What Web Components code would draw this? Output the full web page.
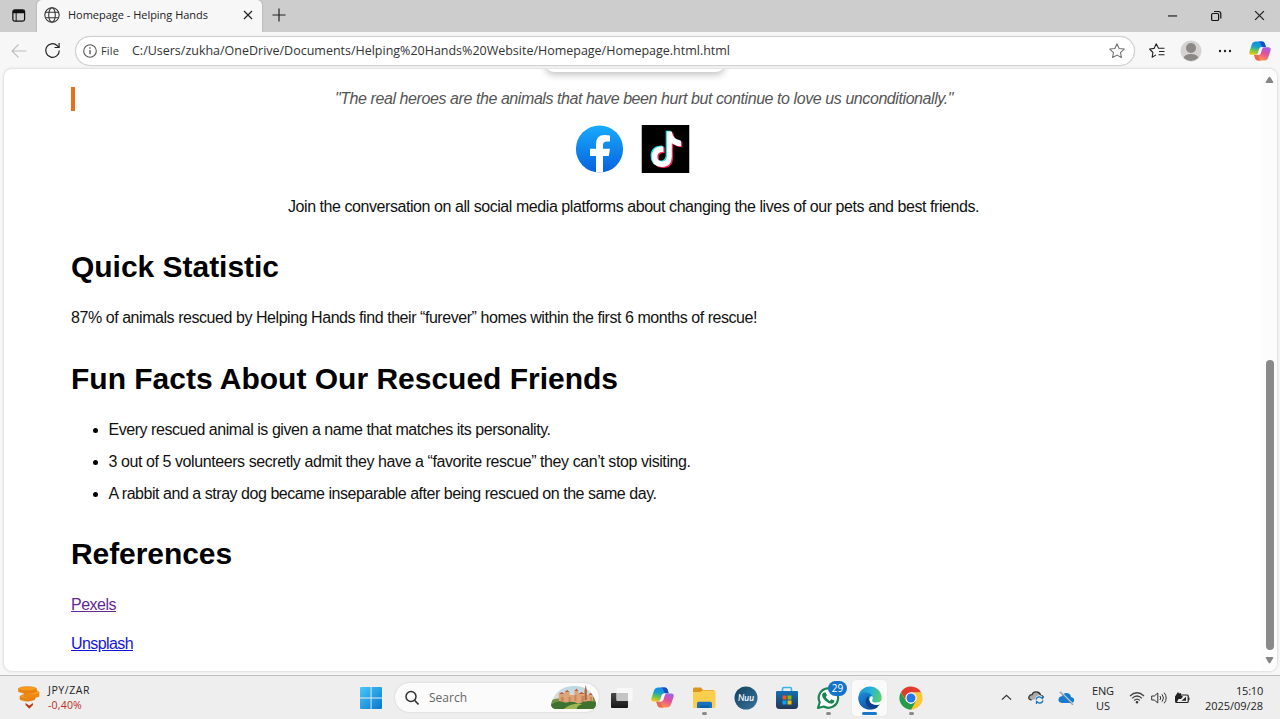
<!DOCTYPE html>
<html lang="en"><head><meta charset="utf-8"><title>Homepage - Helping Hands</title>
<style>html,body{margin:0;height:100%;overflow:hidden}body{font-family:"Liberation Sans",Arial,sans-serif}</style></head>
<body><desktop-screen></desktop-screen>
<script>
const define=(name,html)=>{const t=document.createElement('template');t.innerHTML=html;
 customElements.define(name,class extends HTMLElement{constructor(){super();this.attachShadow({mode:'open'}).append(t.content.cloneNode(true));}});};

/* Inline text that spreads its letters evenly over a given width */
customElements.define('fit-text',class extends HTMLElement{
 constructor(){super();this.attachShadow({mode:'open'}).innerHTML='<style>:host{display:inline-block;white-space:nowrap}span{display:inline-block;text-decoration:inherit}</style><span><slot></slot></span>';}
 connectedCallback(){const w=+this.getAttribute('width'),s=this.shadowRoot.querySelector('span');const n=this.textContent.length;
  s.style.letterSpacing=((w-s.getBoundingClientRect().width)/n)+'px';this.style.width=w+'px';}
});

const icons={
 tabs:['0 0 16 16','<rect x="2" y="2" width="12.5" height="12" rx="2" fill="none" stroke="#111" stroke-width="1.3"/><path d="M2 4q0-2 2-2h8.500q2 0 2 2v1.500H2z" fill="#111"/><path d="M5.500 5v9" stroke="#111" stroke-width="1"/>'],
 globe:['0 0 16 16','<g fill="none" stroke="#333" stroke-width="1.050"><circle cx="8" cy="8" r="7.200"/><ellipse cx="8" cy="8" rx="3.300" ry="7.200"/><path d="M1.500 5.300h13M1.500 10.700h13"/></g>'],
 close:['0 0 10 10','<path d="M1 1l8 8M9 1l-8 8" stroke="#222" stroke-width="1.200" fill="none"/>'],
 plus:['0 0 14 14','<path d="M.5 7h13M7 .5v13" stroke="#222" stroke-width="1.200"/>'],
 min:['0 0 12 12','<path d="M1 6.500h10" stroke="#111" stroke-width="1.200"/>'],
 restore:['0 0 12 12','<g fill="none" stroke="#111" stroke-width="1.200"><rect x="1.600" y="3.500" width="7" height="7" rx="1.300"/><path d="M4 1.500h4.500q2.300 0 2.300 2.300V8.500"/></g>'],
 back:['0 0 16 16','<path d="M15.500 8H1M7.500 1.500L1 8l6.500 6.500" fill="none" stroke="#bebebe" stroke-width="1.100"/>'],
 reload:['0 0 18 18','<path d="M16.200 9A7.200 7.200 0 1 1 13.800 3.650L16 5.700" fill="none" stroke="#222" stroke-width="1.250"/><path d="M16 1v4.800h-4.800" fill="none" stroke="#222" stroke-width="1.250"/>'],
 info:['0 0 14 14','<circle cx="7" cy="7" r="6.300" fill="none" stroke="#555" stroke-width="1.100"/><path d="M7 6v4.300" stroke="#444" stroke-width="1.200"/><circle cx="7" cy="4" r=".8" fill="#444"/>'],
 star:['0 0 16 16','<path d="M8 .8l2.150 4.650 5.050.65-3.700 3.450.95 5-4.450-2.450-4.450 2.450.95-5L.8 6.100l5.050-.65z" fill="none" stroke="#707070" stroke-width="1.050" stroke-linejoin="round"/>'],
 favs:['0 0 16 16','<path d="M9.500 5.300L7.200.8 5.100 5.400.6 6l3.300 3.500-.8 4.800 3.900-2.400M9 5.300h6.500M10 8.500h5.500M9.500 11.800h6" fill="none" stroke="#222" stroke-width="1.100" stroke-linejoin="round"/>'],
 user:['0 0 22 22','<defs><clipPath id="c"><circle cx="11" cy="11" r="10"/></clipPath></defs><circle cx="11" cy="11" r="10.500" fill="#d5d3d1"/><g fill="#8b8886"><circle cx="11" cy="8" r="5"/><ellipse cx="11" cy="18.500" rx="7.500" ry="4.500" clip-path="url(#c)"/></g>'],
 more:['0 0 14 4','<g fill="#222"><circle cx="2" cy="2" r="1.200"/><circle cx="7" cy="2" r="1.200"/><circle cx="12" cy="2" r="1.200"/></g>'],
 copilot:['0 0 23 21','<defs><linearGradient id="a" x1=".6" y1="0" x2=".3" y2="1"><stop stop-color="#1687e8"/><stop offset=".4" stop-color="#15a0cf"/><stop offset=".7" stop-color="#6dc54c"/><stop offset="1" stop-color="#f2c61b"/></linearGradient><linearGradient id="b" x1=".8" y1="0" x2=".4" y2="1"><stop stop-color="#9b65ed"/><stop offset=".45" stop-color="#e24e9e"/><stop offset="1" stop-color="#ff974b"/></linearGradient></defs><path d="M7.500.5H14q1.800 0 2.500 2l1.200 3.800h-3.200q-2 0-2.600 2L10 14.500H2.500Q-.4 14.500.4 11.300L3 3.500Q4 .5 7.500.5z" fill="url(#a)"/><path d="M10 .5h4q1.800 0 2.500 2l1.200 3.800h-3.500Q13 5.500 12.300 3 11.500.7 10 .5z" fill="#1a4bc4"/><path d="M15.500 20.500H9q-1.800 0-2.500-2l-1.200-3.800h3.200q2 0 2.600-2L13 6.500h7.500q2.900 0 2.100 3.200L20 17.500q-1 3-4.500 3z" fill="url(#b)"/><path d="M13 20.500H9q-1.800 0-2.500-2l-1.200-3.800h3.500q1.200.8 1.900 3.300.8 2.300 2.300 2.500z" fill="#f0664d"/><path d="M12.300 6.500h3.200q-1.300.5-1.800 2l-1.200 4q-.7 2-2.500 2H7.500q1.300-.5 1.800-2l1.200-4q.5-1.700 1.800-2z" fill="#fff"/>'],
 facebook:['0 0 48 48','<defs><linearGradient id="f" x2="0" y2="1"><stop stop-color="#18abfc"/><stop offset="1" stop-color="#0761df"/></linearGradient></defs><circle cx="24" cy="24" r="23.600" fill="url(#f)"/><path d="M20.500 47.300V31h-6v-7.300h6v-4.800q0-9 8.600-9 2.800 0 5.400.6v6h-3.200q-3.800 0-3.800 3.600v3.600h7L33.300 31h-5.800v16.300q-3.500.6-7 0z" fill="#fff"/>'],
 tiktok:['0 0 48 48','<path d="M0 0h48v48H0z" fill="#000"/><defs><path id="n" d="M25.500 6.500h4.800q1 8.500 9.200 9.200v5.600q-5 0-9.200-3v12.400q0 11.300-10 11.300-9.900-.4-9.900-10.300 0-10.200 11.500-10.400v5.700q-6-.5-6 4.500 0 4.900 4.700 4.900 4.900 0 4.900-5.800z"/></defs><use href="#n" x="-1.300" y="-.8" fill="#25e6e0"/><use href="#n" x="1.300" y="1" fill="#fa2856"/><use href="#n" fill="#fff"/>'],
 up:['0 0 10 8','<path d="M2 8h6q2 0 1-1.500L6 1.500Q5 .2 4 1.500L1 6.500Q0 8 2 8z" fill="#858585"/>'],
 down:['0 0 10 8','<path d="M2 0h6q2 0 1 1.500L6 6.500Q5 7.800 4 6.500L1 1.500Q0 0 2 0z" fill="#858585"/>'],
 coins:['0 0 22 23','<g stroke="#df7c0c" stroke-width=".5"><path d="M2 10.500h15v3q-7.500 3.500-15 0z" fill="#e98213"/><ellipse cx="9.500" cy="10.500" rx="7.500" ry="2.200" fill="#f8951c"/><path d="M6 6.500h15v4q-7.500 3-15 0z" fill="#ef8a14"/><ellipse cx="13.500" cy="6.500" rx="7.500" ry="2.300" fill="#fd9f22"/><path d="M.5 2.700h18v3q-9 3.400-18 0z" fill="#e98213"/><ellipse cx="9.500" cy="2.700" rx="9" ry="2.100" fill="#f9991e"/></g><path d="M7.500 17l3.800 2.400L15 17v2l-3.700 3.700L7.500 19z" fill="#bd3c16"/>'],
 windows:['0 0 22 22','<defs><linearGradient id="w" x2="1" y2="1" gradientUnits="objectBoundingBox"><stop stop-color="#46c9fb"/><stop offset="1" stop-color="#0875ce"/></linearGradient></defs><path d="M1 0h9.600v10.600H0V1q0-1 1-1zM11.500 0H21q1 0 1 1v9.600H11.500zM0 11.500h10.600V22H1q-1 0-1-1zM11.500 11.500H22V21q0 1-1 1h-9.500z" fill="url(#w)"/>'],
 search:['0 0 14 16','<circle cx="6" cy="6.500" r="5" fill="#fbfbfb" stroke="#303030" stroke-width="1.500"/><path d="M9.500 10.200l4 4.300" stroke="#303030" stroke-width="1.600"/>'],
 castle:['0 0 46 25','<defs><clipPath id="k"><path d="M0 19Q5 2 22 1q19-1 24 17 0 6-5 6H6q-6 0-6-5z"/></clipPath><linearGradient id="s" x2="0" y2="1"><stop stop-color="#b9d6e6"/><stop offset="1" stop-color="#f2e7cf"/></linearGradient></defs><g clip-path="url(#k)"><path d="M0 0h46v25H0z" fill="url(#s)"/><path d="M0 15q8-3 15-1 15-4 31-2v13H0z" fill="#729144"/><path d="M8 9h6v-2h5v3h5V6h4v3h6V5h3v5h6v7q-16 4-35-1z" fill="#dda576"/><path d="M8 9l3-2 3 2zM14 7l2.500-2L19 7zM24 6l2-2.500L28 6zM28 9l3-2 4 2zM38 10l3-2.500 3 2.500z" fill="#bd5e40"/><path d="M10 12h3v5h-3zM18 12h2v5h-2zM24 10h2v6h-2zM31 11h3v6h-3zM40 12h2v4h-2z" fill="#c98560"/><path d="M0 20q7-6 15-2 7-3 13 1 8-5 18-2v8H0z" fill="#3f7230"/><path d="M13 24q7-6 19-5-6 2-6 6z" fill="#9db552"/></g><path d="M34.500 15V5l1-5 1 5v10z" fill="#a9663e"/>'],
 task:['0 0 22 22','<defs><linearGradient id="t" x2="0" y2="1"><stop stop-color="#4a4a4a"/><stop offset="1" stop-color="#171717"/></linearGradient></defs><rect y="6" width="17" height="15" rx="1" fill="url(#t)"/><rect x="5.500" y="1" width="16" height="13" rx="1" fill="#fafafa" fill-opacity=".82"/><path d="M5.500 6H17v8H6.500q-1 0-1-1z" fill="#c5c5c5"/>'],
 folder:['0 0 24 22','<path d="M1 2q0-1.500 1.500-1.500H9L11 3h10q1.500 0 1.500 1.500V9H1z" fill="#d9951d"/><path d="M1 5h7.500l2-1.500H22q1.500 0 1.500 1.500v14.500q0 1.500-1.500 1.500H2.500Q1 21 1 19.500z" fill="#fbce4c"/><path d="M5 21v-4.500q0-1.700 1.700-1.700h11.600q1.700 0 1.700 1.700V21z" fill="#1871bd"/><path d="M8 18.500h9V21H8z" fill="#0c5fa5"/>'],
 nuu:['0 0 24 24','<defs><linearGradient id="q" x2="1" y2="1"><stop stop-color="#123f5f"/><stop offset="1" stop-color="#38759b"/></linearGradient></defs><circle cx="12" cy="12" r="11.500" fill="url(#q)"/><text x="4" y="15.300" font-family="Lato,sans-serif" font-size="9.500" font-style="italic" font-weight="600" fill="#fff" textLength="16" lengthAdjust="spacingAndGlyphs">Nuu</text>'],
 store:['0 0 22 24','<path d="M6.500 6.500V3q0-1.500 1.500-1.500h6q1.500 0 1.500 1.500v3.500" fill="none" stroke="#36b6e9" stroke-width="1.600"/><defs><linearGradient id="r" x2="0" y2="1"><stop stop-color="#146fb4"/><stop offset="1" stop-color="#243653"/></linearGradient></defs><path d="M0 6q0-1 1-1h20q1 0 1 1v13.500q0 3.500-3.500 3.500h-15Q0 23 0 19.500z" fill="url(#r)"/><path d="M6.500 9.500h4v4h-4z" fill="#f35325"/><path d="M11.500 9.500h4v4h-4z" fill="#81bc06"/><path d="M6.500 14.500h4v4h-4z" fill="#05a6f0"/><path d="M11.500 14.500h4v4h-4z" fill="#ffba08"/>'],
 whatsapp:['0 0 24 24','<path d="M2 22l1.700-5.700A9.700 9.700 0 1 1 7.700 20.500z" fill="#fff" stroke="#198652" stroke-width="2.200" stroke-linejoin="round"/><path d="M8 6.500h1.700l1.300 3-1.200 1.600q1.400 2.700 4 3.800l1.500-1.700 3 1.400q.3 2.800-2.800 3.200-3.300 0-6.700-3.500-3-3.300-2.700-5.500.4-1.800 1.900-2.300z" fill="#198652"/>'],
 edge:['0 0 24 24','<defs><linearGradient id="e" y1=".2" x2="1" y2=".5"><stop stop-color="#1c91dc"/><stop offset=".5" stop-color="#27b4d6"/><stop offset="1" stop-color="#5fd163"/></linearGradient><linearGradient id="g" x2=".6" y2="1"><stop stop-color="#1b8edb"/><stop offset="1" stop-color="#104fa2"/></linearGradient></defs><circle cx="12" cy="12" r="11.600" fill="url(#e)"/><path d="M.4 12Q1.500 6.500 7.500 6.500q5 0 6.500 3.500-4.500 0-4.500 4.500.5 5 6.500 6l4 .5Q16.500 23.800 12 23.600.8 22.800.4 12z" fill="url(#g)"/><path d="M10.500 10q-4.500 3.500-2 8.500 3.500 5 9.500 3.500l4-3.700q-3 1.500-6.500.2-5-2-5-8.500z" fill="#123f87"/><path d="M14 10q1.700 2 .2 4.200-.5 2.300 4.300 2.300 3.200 0 5.500-2.500l-1.800 4.300q-3 1.300-6.300.3-4.900-1.600-4.400-5.600.3-2.300 2.500-3z" fill="#fff"/>'],
 chrome:['0 0 24 24','<path d="M12 12l0 11.650A11.650 11.650 0 0 0 22.100 6.200H12z" fill="#fcc832"/><path d="M1.900 6.200L7 15l5-3V6.300h10.100A11.650 11.650 0 0 0 1.900 6.200z" fill="#e33b2e"/><path d="M1.900 6.200L7 15l5 3 5-3-5 8.650A11.650 11.650 0 0 1 1.900 6.200z" fill="#269c4b"/><circle cx="12" cy="12" r="5.700" fill="#fff"/><circle cx="12" cy="12" r="4.500" fill="#2877e7"/>'],
 chevron:['0 0 12 8','<path d="M1 6.500l5-5 5 5" fill="none" stroke="#333" stroke-width="1.400"/>'],
 sync:['0 0 17 15','<path d="M3.500 10Q0 9.500 1 6.700 2 4.500 4 4.700 5.500 1 9 2q3 .5 3.700 3.500 2.500.3 2.800 2.500" fill="#aaa" stroke="#333" stroke-width="1.300"/><circle cx="11.500" cy="10" r="4.700" fill="#eee"/><path d="M8 9.500q1-3 4-2.500l2.500 1.500V6M15 10.500q-1 3-4 2.500L8.500 11.500V14" fill="none" stroke="#1375c5" stroke-width="1.300"/>'],
 cloud:['0 0 17 14','<path d="M4 12Q0 11.500.5 8.300 1 5.300 4 5.300 5.500 1.500 9 2q3.500.5 4 4 3 .5 3.200 3-.2 3-3 3z" fill="#147bd1"/><path d="M2.500.5l13 13" stroke="#b9cad5" stroke-width="1.200"/><path d="M1.700 1l13 13" stroke="#71838f" stroke-width="1"/>'],
 wifi:['0 0 16 13','<path d="M1 5q7-6.500 14 0M3 7.400q5-4.800 10 0M5.200 9.500q2.800-2.700 5.600 0" fill="none" stroke="#444" stroke-width="1.200"/><circle cx="8" cy="11.300" r="1.200" fill="#333"/>'],
 sound:['0 0 16 14','<g fill="none" stroke="#333" stroke-width="1"><path d="M.7 5v4h2.600l3.500 3V2L3.300 5z"/><path d="M9 5q1.400 2 0 4M11 3.300q3 3.700 0 7.400M13.200 1.700q4 5.300 0 10.600"/></g>'],
 battery:['0 0 16 13','<path d="M4.500 4h8.700q1 0 1 1v5.500q0 1-1 1H2V8" fill="none" stroke="#222" stroke-width="1.200"/><path d="M14.500 6.500h1v2.500h-1zM7.500 9.800l4.500-4v4z" fill="#222"/><path d="M1 10.500V5.500L4 1l1 1.500L7 2v2.500l2 1L7 8H4.500L3 11z" fill="#222"/>']
};
customElements.define('ui-icon',class extends HTMLElement{
 constructor(){super();this.attachShadow({mode:'open'});}
 connectedCallback(){const [box,art]=icons[this.getAttribute('name')],w=this.getAttribute('w'),h=this.getAttribute('h')||w;
 this.shadowRoot.innerHTML=`<style>:host{display:block;flex:none;width:${w}px;height:${h}px}svg{display:block}</style><svg width="${w}" height="${h}" viewBox="${box}" preserveAspectRatio="none" aria-hidden="true">${art}</svg>`;}
});

define('browser-tabs',`<style>
:host{display:flex;height:32px;background:#cdcdcd;align-items:center;font:11px/16px "Open Sans","Noto Sans",sans-serif;color:#222}
.first{width:37px;height:32px;display:flex;align-items:center;padding:0 0 2px 11px;box-sizing:border-box}
.tab{width:225px;height:32px;background:#f7f7f7;border-radius:5px 5px 0 0;display:flex;align-items:center;padding:0 9px 2px 7px;box-sizing:border-box;box-shadow:0 0 2px #999}
.tab fit-text{margin-left:8px;flex:none}.tab .x{margin-left:auto}
.plus{margin-left:10px;margin-top:-3px}.win{margin-left:auto;display:flex;gap:32px;padding-right:15px}
</style><div class="first"><ui-icon name="tabs" w="15"></ui-icon></div>
<div class="tab"><ui-icon name="globe" w="16"></ui-icon><fit-text width="140">Homepage - Helping Hands</fit-text><ui-icon class="x" name="close" w="10"></ui-icon></div>
<ui-icon class="plus" name="plus" w="14"></ui-icon>
<div class="win"><ui-icon name="min" w="11"></ui-icon><ui-icon name="restore" w="12"></ui-icon><ui-icon name="close" w="11"></ui-icon></div>`);

define('browser-toolbar',`<style>
:host{display:flex;height:37px;background:#f7f7f7;align-items:center;padding:0 9px 0 11px;box-sizing:border-box;font:12px/18px "Open Sans","Noto Sans",sans-serif;color:#333}
.reload{margin-left:17px}
.bar{margin-left:14px;width:1060px;height:30px;border:1px solid #d0d0d0;border-radius:15px;background:#fff;box-sizing:border-box;display:flex;align-items:center;padding:0 9px 0 7px;box-shadow:0 0 1px #ccc}
.file{margin-left:4px;font-size:11px}.url{margin-left:13px;font-size:12.500px}.star{margin-left:auto}
.tools{display:flex;align-items:center;margin-left:auto}.u{margin-left:15px}.m{margin-left:16px}.c{margin-left:17px}
</style><ui-icon name="back" w="16"></ui-icon><ui-icon class="reload" name="reload" w="17"></ui-icon>
<div class="bar"><ui-icon name="info" w="14"></ui-icon><fit-text class="file" width="18">File</fit-text><fit-text class="url" width="598">C:/Users/zukha/OneDrive/Documents/Helping%20Hands%20Website/Homepage/Homepage.html.html</fit-text><ui-icon class="star" name="star" w="16"></ui-icon></div>
<div class="tools"><ui-icon name="favs" w="16"></ui-icon><ui-icon class="u" name="user" w="22"></ui-icon><ui-icon class="m" name="more" w="14" h="4"></ui-icon><ui-icon class="c" name="copilot" w="22" h="20"></ui-icon></div>`);

define('page-scrollbar',`<style>
:host{display:flex;flex-direction:column;align-items:center;width:15px;height:100%;box-sizing:border-box;padding:7px 0 7px;background:#fcfcfc}
.thumb{width:8px;height:290px;border-radius:4px;background:#898989;margin-top:auto;margin-bottom:7px}
</style><ui-icon name="up" w="9" h="7"></ui-icon><div class="thumb"></div><ui-icon name="down" w="9" h="7"></ui-icon>`);

define('web-page',`<style>
:host{display:flex;height:602px;margin:0 3px 0 4px;background:#fff;border-radius:8px;overflow:hidden;box-shadow:0 0 3px #c4c4c4;font:16px/24px "Liberation Sans",Arial,sans-serif;color:#111}
main{flex:1;padding:0 66px 0 67px;min-width:0}
.card{width:180px;height:12px;margin:-9px auto 0;border-radius:0 0 9px 9px;background:#fff;box-shadow:0 3px 7px #c4c4c4;transform:translateX(1px)}
blockquote{margin:15px 0 0;border-left:4px solid #e8701a;padding-left:17px;text-align:center;font-style:italic;color:#555;height:24px}
.social{display:flex;justify-content:center;gap:18px;margin:14px 1px 0 0;transform:translateX(-.5px)}
p,h1,ul{margin:0;padding:0}.join{text-align:center;margin-top:22px}
h1{font-size:30px;line-height:36px;height:36px;margin-top:30px;color:#000}p{height:24px}h1+p,h1+ul{margin-top:21px}
ul{list-style:none}li{height:24px;margin-bottom:8px;display:flex;align-items:center;padding-left:22px;gap:10px}li:last-child{margin:0}
li::before{content:"";width:5px;height:5px;border-radius:50%;background:#000;margin:1px .5px 0 0}
.fun{margin-top:31px}.un{margin-top:15px}a{color:#642894}.un a{color:#1414e0}a fit-text{text-decoration:underline}
</style><main><div class="card"></div>
<blockquote><fit-text width="618">"The real heroes are the animals that have been hurt but continue to love us unconditionally."</fit-text></blockquote>
<div class="social"><ui-icon name="facebook" w="48"></ui-icon><ui-icon name="tiktok" w="48"></ui-icon></div>
<p class="join"><fit-text width="691">Join the conversation on all social media platforms about changing the lives of our pets and best friends.</fit-text></p>
<h1><fit-text width="208">Quick Statistic</fit-text></h1>
<p><fit-text width="686">87% of animals rescued by Helping Hands find their “furever” homes within the first 6 months of rescue!</fit-text></p>
<h1 class="fun"><fit-text width="547">Fun Facts About Our Rescued Friends</fit-text></h1>
<ul><li><fit-text width="442">Every rescued animal is given a name that matches its personality.</fit-text></li><li><fit-text width="582">3 out of 5 volunteers secretly admit they have a “favorite rescue” they can’t stop visiting.</fit-text></li><li><fit-text width="548">A rabbit and a stray dog became inseparable after being rescued on the same day.</fit-text></li></ul>
<h1><fit-text width="161">References</fit-text></h1>
<p><a href="#"><fit-text width="45">Pexels</fit-text></a></p>
<p class="un"><a href="#"><fit-text width="62">Unsplash</fit-text></a></p>
</main><page-scrollbar></page-scrollbar>`);

define('task-app',`<style>
:host{display:flex;position:relative;width:35px;height:36px;border-radius:4px;align-items:center;justify-content:center}
:host([active]){background:#fafafa;box-shadow:0 0 1px #ccc}
i{display:none;position:absolute;bottom:1px;width:5px;height:3px;border-radius:2px;background:#8a8a8a}
:host([open]) i{display:block}:host([active]) i{display:block;width:15px;background:#1678cd}
</style><slot></slot><i></i>`);

define('task-bar',`<style>
:host{display:flex;height:44px;box-sizing:border-box;border-top:1px solid #bcc0bc;background:#eee;align-items:center;font:11px/15px "Open Sans","Noto Sans",sans-serif;color:#222}
.widget{display:flex;align-items:center;width:342px;padding-left:18px;gap:8px;box-sizing:border-box}.widget fit-text{display:block;font-size:10.500px}.red{color:#c12c23}
.win{margin-left:18px}.search{margin-left:13px;width:204px;height:29px;border-radius:15px;background:#fbfbfb;box-shadow:0 0 2px #c6c6c6;display:flex;align-items:center;padding:0 3px 0 10px;box-sizing:border-box;font-size:12px;color:#666}
.search fit-text{margin-left:10px}.castle{margin-left:auto}
.apps{display:flex;gap:6.400px;margin-left:5px}
.badge{position:absolute;top:1px;right:-1px;width:19px;height:15px;border-radius:8px;background:#1473c8;color:#fff;font-size:10px;line-height:15px;text-align:center}
.tray{display:flex;align-items:center;margin-left:auto;padding-right:17px}.lang{text-align:center;margin-left:17px}.lang fit-text,.clock fit-text{display:block}.lang fit-text{margin:auto}
.clock{margin-left:15px}.clock fit-text:first-child{margin-left:auto}
</style><div class="widget"><ui-icon name="coins" w="22" h="23"></ui-icon><div><fit-text width="42">JPY/ZAR</fit-text><fit-text class="red" width="34">-0,40%</fit-text></div></div>
<ui-icon class="win" name="windows" w="22"></ui-icon>
<div class="search"><ui-icon name="search" w="14" h="16"></ui-icon><fit-text width="38">Search</fit-text><ui-icon class="castle" name="castle" w="45" h="25"></ui-icon></div>
<div class="apps"><task-app><ui-icon name="task" w="22"></ui-icon></task-app><task-app><ui-icon name="copilot" w="23" h="21"></ui-icon></task-app><task-app open><ui-icon name="folder" w="24" h="22"></ui-icon></task-app><task-app><ui-icon name="nuu" w="24"></ui-icon></task-app><task-app><ui-icon name="store" w="22" h="24"></ui-icon></task-app><task-app open><ui-icon name="whatsapp" w="24"></ui-icon><span class="badge">29</span></task-app><task-app active><ui-icon name="edge" w="24"></ui-icon></task-app><task-app open><ui-icon name="chrome" w="24"></ui-icon></task-app></div>
<div class="tray"><ui-icon name="chevron" w="11" h="7"></ui-icon><ui-icon name="sync" w="17" h="15" style="margin-left:16px"></ui-icon><ui-icon name="cloud" w="17" h="14" style="margin-left:13px"></ui-icon>
<div class="lang"><fit-text width="22">ENG</fit-text><fit-text width="14">US</fit-text></div><ui-icon name="wifi" w="16" h="13" style="margin-left:15px"></ui-icon><ui-icon name="sound" w="16" h="14" style="margin-left:6px"></ui-icon><ui-icon name="battery" w="16" h="13" style="margin-left:7px"></ui-icon>
<div class="clock"><fit-text width="27">15:10</fit-text><fit-text width="58">2025/09/28</fit-text></div></div>`);

define('desktop-screen',`<style>:host{display:flex;flex-direction:column;width:1280px;height:719px;overflow:hidden;background:#f7f7f7}task-bar{margin-top:auto}</style>
<browser-tabs></browser-tabs><browser-toolbar></browser-toolbar><web-page></web-page><task-bar></task-bar>`);
</script></body></html>
